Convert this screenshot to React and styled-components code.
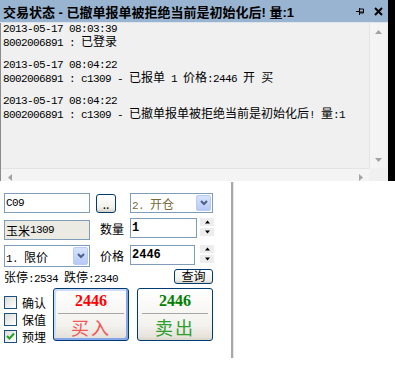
import React from 'react';
import styled, { createGlobalStyle } from 'styled-components';

const GlobalStyle = createGlobalStyle`
  body {
    margin: 0;
    background: #fff;
    font-family: "Liberation Sans", "Noto Sans CJK SC", sans-serif;
  }
`;

const CJK = /([\u2e80-\u9fff\uff01-\uffef]+)/;

const Mixed = ({ text }) =>
  text.split(CJK).map((part, i) => (i % 2 ? <Han key={i}>{part}</Han> : part));

const logLines = [
  '2013-05-17 08:03:39',
  '8002006891 : 已登录',
  '',
  '2013-05-17 08:04:22',
  '8002006891 : c1309 - 已报单 1 价格:2446 开 买',
  '',
  '2013-05-17 08:04:22',
  '8002006891 : c1309 - 已撤单报单被拒绝当前是初始化后! 量:1',
];

const Arrow = ({ dir, color = '#a3a3a3', size = 7 }) => {
  const paths = {
    up: 'M0 4L3.5 0L7 4Z',
    down: 'M0 0L7 0L3.5 4Z',
    left: 'M4 0L4 7L0 3.5Z',
    right: 'M0 0L4 3.5L0 7Z',
  };
  const vertical = dir === 'up' || dir === 'down';
  return (
    <svg
      width={vertical ? size : 4}
      height={vertical ? 4 : size}
      viewBox={vertical ? '0 0 7 4' : '0 0 4 7'}
    >
      <path d={paths[dir]} fill={color} />
    </svg>
  );
};

const Chevron = () => (
  <svg width="8" height="6" viewBox="0 0 8 6">
    <path d="M1 1L4 4L7 1" fill="none" stroke="#4d6185" strokeWidth="2" />
  </svg>
);

const Check = () => (
  <svg width="9" height="9" viewBox="0 0 9 9">
    <path d="M1 4L3.5 6.5L8 1.5" fill="none" stroke="#21a121" strokeWidth="2" />
  </svg>
);

const Combo = ({ value, w, h, brown }) => (
  <Field $w={w} $h={h}>
    <ComboText $brown={brown}>
      <Mixed text={value} />
    </ComboText>
    <DropBtn>
      <Chevron />
    </DropBtn>
  </Field>
);

const Spinner = () => (
  <SpinBox>
    <SpinBtn>
      <Arrow dir="up" color="#000" size={5} />
    </SpinBtn>
    <SpinBtn>
      <Arrow dir="down" color="#000" size={5} />
    </SpinBtn>
  </SpinBox>
);

const CheckItem = ({ label, checked }) => (
  <CheckRow>
    <CheckBox>{checked && <Check />}</CheckBox>
    <CheckLabel>{label}</CheckLabel>
  </CheckRow>
);

const App = () => {
  return (
    <Page>
      <GlobalStyle />
      <TopRow>
        <Panel>
          <TitleBar>
            <Title>交易状态 - 已撤单报单被拒绝当前是初始化后! 量:1</Title>
            <TitleIcons>
              <svg width="8" height="7" viewBox="0 0 8 7">
                <path
                  d="M0 3.5H3M3.5 0V7M3.5 1H7.5V5H3.5M3.5 4H7.5"
                  fill="none"
                  stroke="#000"
                  strokeWidth="1"
                />
              </svg>
              <svg width="9" height="9" viewBox="0 0 9 9">
                <path d="M1 1L8 8M8 1L1 8" stroke="#000" strokeWidth="2" />
              </svg>
            </TitleIcons>
          </TitleBar>
          <LogBody>
            <LogText>
              {logLines.map((line, i) => (
                <Line key={i}>
                  <Mixed text={line} />
                </Line>
              ))}
            </LogText>
            <VScroll>
              <ArrowBox>
                <Arrow dir="up" />
              </ArrowBox>
              <ArrowBox>
                <Arrow dir="down" />
              </ArrowBox>
            </VScroll>
            <HScroll>
              <ArrowBox>
                <Arrow dir="left" />
              </ArrowBox>
              <ArrowBox>
                <Arrow dir="right" />
              </ArrowBox>
            </HScroll>
            <Corner />
          </LogBody>
        </Panel>
        <BlackEdge />
      </TopRow>

      <Bottom>
        <OrderForm>
          <FormGrid>
            <Field $w={86}>C09</Field>
            <SmallBtn $w={20} $h={19} $mt={1} $ml={1}>..</SmallBtn>
            <ComboCell>
              <Combo value="2. 开仓" w={83} h={20} brown />
            </ComboCell>

            <Field $w={86} $mt={2} $readOnly>
              <Mixed text="玉米1309" />
            </Field>
            <Label>数量</Label>
            <Field $w={67} $bold>1</Field>
            <Spinner />

            <Combo value="1. 限价" w={86} h={22} />
            <Label>价格</Label>
            <Field $w={65} $bold>2446</Field>
            <Spinner />
          </FormGrid>

          <LimitRow>
            <LimitText>
              <Mixed text="张停:2534 跌停:2340" />
            </LimitText>
            <SmallBtn $w={39} $h={15}>查询</SmallBtn>
          </LimitRow>

          <ActionRow>
            <Checks>
              <CheckItem label="确认" />
              <CheckItem label="保值" />
              <CheckItem label="预埋" checked />
            </Checks>
            <TradeBtn $focused>
              <Price $color="#ff0000">2446</Price>
              <Divider />
              <Action $color="#f25555">买入</Action>
            </TradeBtn>
            <TradeBtn>
              <Price $color="#008000">2446</Price>
              <Divider />
              <Action $color="#2e9e2e">卖出</Action>
            </TradeBtn>
          </ActionRow>
        </OrderForm>
        <Splitter />
      </Bottom>
    </Page>
  );
};

const Page = styled.div`
  width: 395px;
  height: 384px;
  background: #fff;
  overflow: hidden;
`;

const TopRow = styled.div`
  display: flex;
  height: 181px;
  overflow: hidden;
`;

const Panel = styled.section`
  width: 388px;
  display: flex;
  flex-direction: column;
  background: #f0f0f0;
`;

const TitleBar = styled.header`
  height: 22px;
  flex-shrink: 0;
  display: flex;
  align-items: center;
  padding: 0 5px 0 3px;
  background: #99b4d1;
  border-bottom: 1px solid #dde4ec;
`;

const Title = styled.div`
  flex: 1;
  font-family: "Liberation Sans", "Noto Sans CJK SC", sans-serif;
  font-size: 13px;
  font-weight: bold;
  color: #000;
  white-space: nowrap;
  overflow: hidden;
`;

const TitleIcons = styled.div`
  display: flex;
  align-items: center;
  gap: 10px;
  svg {
    display: block;
  }
`;

const LogBody = styled.div`
  flex: 1;
  display: grid;
  grid-template-columns: 1fr 17px;
  grid-template-rows: 145px 17px;
  padding-right: 2px;
  border-left: 1px solid #8c8c8c;
  overflow: hidden;
`;

const LogText = styled.div`
  padding-left: 2px;
  font-family: "Liberation Mono", monospace;
  font-size: 11px;
  letter-spacing: -0.6px;
  color: #000;
  overflow: hidden;
`;

const Line = styled.div`
  height: 12px;
  line-height: 12px;
  white-space: pre;
`;

const Han = styled.span`
  font-family: "Noto Sans CJK SC", sans-serif;
  font-size: 12px;
  letter-spacing: 0;
`;

const VScroll = styled.div`
  display: flex;
  flex-direction: column;
  justify-content: space-between;
  background: #f4f4f4;
  border-left: 1px solid #e4e4e4;
`;

const HScroll = styled.div`
  display: flex;
  justify-content: space-between;
  background: #f4f4f4;
  border-top: 1px solid #e4e4e4;
`;

const ArrowBox = styled.div`
  width: 17px;
  height: 17px;
  display: flex;
  align-items: center;
  justify-content: center;
  svg {
    display: block;
  }
`;

const Corner = styled.div`
  background: #f0f0f0;
`;

const BlackEdge = styled.div`
  flex: 1;
  background: #000;
`;

const Bottom = styled.div`
  display: flex;
  align-items: flex-start;
`;

const OrderForm = styled.div`
  width: 231px;
  box-sizing: border-box;
  padding: 12px 0 0 4px;
`;

const Splitter = styled.div`
  margin-top: 1px;
  width: 2px;
  height: 176px;
  background: #a8a8a8;
  border-right: 1px solid #e6e6e6;
`;

const FormGrid = styled.div`
  display: grid;
  grid-template-columns: 91px 35px 70px 16px;
  grid-template-rows: 20px 22px 22px;
  row-gap: 5px;
  align-items: start;
`;

const Field = styled.div`
  width: ${(p) => p.$w}px;
  height: ${(p) => p.$h || 20}px;
  margin-top: ${(p) => p.$mt || 0}px;
  box-sizing: border-box;
  display: flex;
  align-items: center;
  padding-left: 1px;
  border: 1px solid #7f9db9;
  background: ${(p) => (p.$readOnly ? '#ebebe4' : '#fff')};
  color: #000;
  white-space: pre;
  font-family: "Liberation Mono", monospace;
  font-size: ${(p) => (p.$bold ? '12px' : '11px')};
  font-weight: ${(p) => (p.$bold ? 'bold' : 'normal')};
  letter-spacing: ${(p) => (p.$bold ? '0' : '-0.6px')};
`;

const ComboCell = styled.div`
  grid-column: 3 / 5;
`;

const ComboText = styled.div`
  flex: 1;
  color: ${(p) => (p.$brown ? '#7a6a3a' : '#000')};
`;

const DropBtn = styled.div`
  width: 15px;
  align-self: stretch;
  margin: 1px 1px 1px 0;
  box-sizing: border-box;
  display: flex;
  align-items: center;
  justify-content: center;
  border: 1px solid #b9cbf3;
  border-radius: 2px;
  background: linear-gradient(#d7e3fd, #b6c9f7);
  svg {
    display: block;
  }
`;

const SmallBtn = styled.div`
  width: ${(p) => p.$w}px;
  height: ${(p) => p.$h}px;
  margin-top: ${(p) => p.$mt || 0}px;
  margin-left: ${(p) => p.$ml || 0}px;
  box-sizing: border-box;
  display: flex;
  align-items: center;
  justify-content: center;
  border: 1px solid #003c74;
  border-radius: 3px;
  background: linear-gradient(#ffffff, #f1f0ea 75%, #d8d2c6);
  font-family: "Noto Sans CJK SC", "Liberation Sans", sans-serif;
  font-size: 12px;
  line-height: 1;
  color: #000;
`;

const Label = styled.div`
  height: 20px;
  display: flex;
  align-items: center;
  padding-left: 5px;
  font-family: "Noto Sans CJK SC", sans-serif;
  font-size: 12px;
  color: #000;
`;

const SpinBox = styled.div`
  width: 14px;
  display: flex;
  flex-direction: column;
  gap: 2px;
`;

const SpinBtn = styled.div`
  height: 8px;
  display: flex;
  align-items: center;
  justify-content: center;
  background: #ededed;
  svg {
    display: block;
  }
`;

const LimitRow = styled.div`
  width: 209px;
  height: 16px;
  margin-top: 1px;
  display: flex;
  align-items: center;
  justify-content: space-between;
`;

const LimitText = styled.div`
  font-family: "Liberation Mono", monospace;
  font-size: 11px;
  letter-spacing: -0.6px;
  color: #000;
  white-space: pre;
`;

const ActionRow = styled.div`
  margin-top: 4px;
  display: flex;
  align-items: flex-start;
  gap: 8px;
`;

const Checks = styled.div`
  width: 41px;
  flex-shrink: 0;
  padding-top: 8px;
  display: flex;
  flex-direction: column;
  gap: 4px;
`;

const CheckRow = styled.div`
  display: flex;
  align-items: center;
  height: 13px;
  white-space: nowrap;
`;

const CheckBox = styled.div`
  width: 13px;
  height: 13px;
  flex-shrink: 0;
  box-sizing: border-box;
  display: flex;
  align-items: center;
  justify-content: center;
  border: 1px solid #1c5180;
  background: linear-gradient(135deg, #dcdcd7, #ffffff);
  svg {
    display: block;
  }
`;

const CheckLabel = styled.span`
  margin-left: 5px;
  font-family: "Noto Sans CJK SC", sans-serif;
  font-size: 12px;
  color: #000;
`;

const TradeBtn = styled.div`
  width: 76px;
  height: 53px;
  flex-shrink: 0;
  box-sizing: border-box;
  display: flex;
  flex-direction: column;
  border: 1px solid #003c74;
  border-radius: 3px;
  background: linear-gradient(#ffffff, #f3f2ee 70%, #e2dfd6);
  box-shadow: ${(p) =>
    p.$focused
      ? 'inset -2px -2px 0 #86a6eb, inset 2px 2px 0 #cfdcf7'
      : 'inset 0 -2px 0 #dcd8cc'};
`;

const Price = styled.div`
  height: 26px;
  display: flex;
  align-items: center;
  justify-content: center;
  font-family: "Liberation Serif", serif;
  font-size: 16px;
  font-weight: bold;
  color: ${(p) => p.$color};
`;

const Divider = styled.div`
  height: 1px;
  margin: 0 4px;
  background: #a6a6a6;
`;

const Action = styled.div`
  flex: 1;
  display: flex;
  align-items: center;
  justify-content: center;
  letter-spacing: 2px;
  font-family: "Noto Sans CJK SC", sans-serif;
  font-size: 18px;
  color: ${(p) => p.$color};
`;

export default App;
